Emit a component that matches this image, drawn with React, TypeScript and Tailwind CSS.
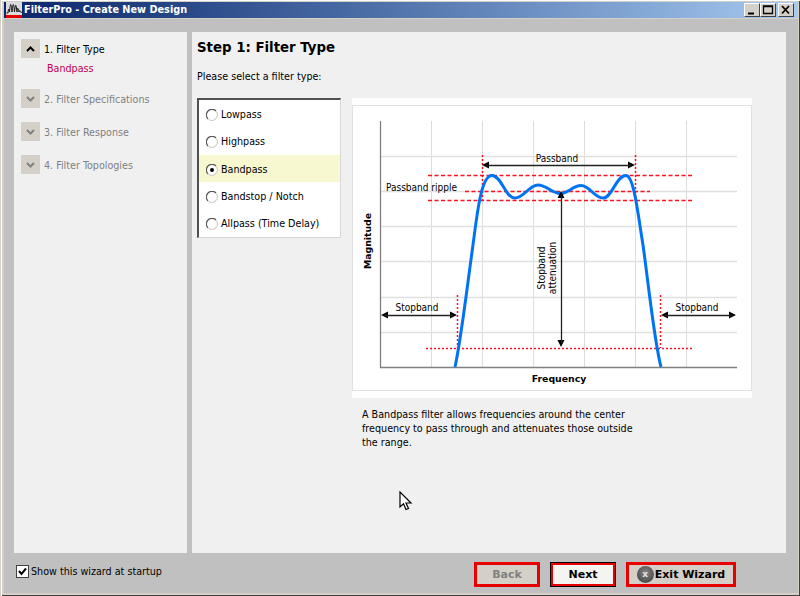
const steps = [
  { label: "2. Filter Specifications", top: "mt-[11px]" },
  { label: "3. Filter Response", top: "mt-[14px]" },
  { label: "4. Filter Topologies", top: "mt-[14px]" },
];

const filterTypes = [
  { label: "Lowpass", height: "h-[27px]" },
  { label: "Highpass", height: "h-[28px]" },
  { label: "Bandpass", height: "h-[27px]", selected: true },
  { label: "Bandstop / Notch", height: "h-[27px]" },
  { label: "Allpass (Time Delay)", height: "h-[27px]" },
];

function Chevron({ up, color }: { up?: boolean; color: string }) {
  return (
    <svg width="9" height="6" viewBox="0 0 9 6" fill="none" stroke={color} strokeWidth="2">
      <path d={up ? "M1 5 L4.5 1.5 L8 5" : "M1 1 L4.5 4.5 L8 1"} />
    </svg>
  );
}

function AppIcon() {
  return (
    <svg width="16" height="16" viewBox="0 0 16 16" className="shrink-0">
      <rect width="16" height="16" fill="#dcdcdc" />
      <rect y="13" width="16" height="3" fill="#e60000" />
      <path
        d="M0.500 11 H2 C2.500 6 3 6 3.500 10 C4.500 0 5 0 6 10 C7 0 7.500 0 8.500 10 C9.500 1 10 1 11 10 C11.500 5 12 5 13 10 C13.500 8 14 8 15.500 11"
        fill="none"
        stroke="#111"
        strokeWidth="1"
      />
    </svg>
  );
}

function CaptionButton({ kind }: { kind: "min" | "max" | "close" }) {
  return (
    <div className="w-[16px] h-[14px] bg-[#d4d0c8] border border-t-white border-l-white border-r-[#404040] border-b-[#404040] flex items-center justify-center">
      <svg width="12" height="10" viewBox="0 0 12 10" fill="none" stroke="#000">
        {kind === "min" && <path d="M2 8.500 H8" strokeWidth="2" />}
        {kind === "max" && <path d="M1.500 1 H10.500 V8.500 H1.500 Z M1.500 1.500 H10.500" strokeWidth="1.300" />}
        {kind === "close" && <path d="M2 1 L9 8.500 M9 1 L2 8.500" strokeWidth="1.800" />}
      </svg>
    </div>
  );
}

function Radio({ checked }: { checked?: boolean }) {
  return (
    <svg width="12" height="12" viewBox="0 0 12 12" className="shrink-0">
      <circle cx="6" cy="6" r="5.500" fill="#fff" />
      <path d="M10 2 A5.500 5.500 0 0 0 2 10" fill="none" stroke="#555" strokeWidth="1.200" />
      <path d="M10.200 2.500 A5.500 5.500 0 0 1 2.500 10.200" fill="none" stroke="#d4d0c8" strokeWidth="1.200" />
      {checked && <circle cx="6" cy="6" r="2" fill="#000" />}
    </svg>
  );
}

function FilterChart() {
  const gridX = [431, 482, 533, 584, 635, 686];
  const gridY = [156, 191, 226, 261, 297, 332];
  const red = "#ff1020";
  return (
    <svg width="400" height="300" viewBox="352 98 400 300" className="block">
      <rect x="352" y="98" width="400" height="300" fill="#fff" />
      <rect x="352.500" y="105.500" width="399" height="285" fill="#fff" stroke="#e0e0e0" />
      {gridX.map((x) => (
        <line key={x} x1={x + 0.5} x2={x + 0.5} y1="121" y2="367" stroke="#dcdcdc" />
      ))}
      {gridY.map((y) => (
        <line key={y} x1="381" x2="737" y1={y + 0.5} y2={y + 0.5} stroke="#e0e0e0" strokeWidth="1.500" />
      ))}
      <path d="M380.500 121 V367.500 H737" fill="none" stroke="#808080" strokeWidth="1.300" />

      <g stroke={red} strokeWidth="1.300" fill="none" strokeDasharray="4 2.500">
        <path d="M428 175.500 H692 M428 200.500 H692 M465 191.500 H650" />
      </g>
      <g stroke={red} strokeWidth="1.500" fill="none" strokeDasharray="2 2">
        <path d="M482.500 155 V200 M635.500 155 V200 M457.500 295 V348 M660.500 295 V348 M426 348.500 H692" />
      </g>

      <path
        d="M455 367 C461 340 468 280 473 245 C477 215 481 175 492 175.500 C502 176 505 198 515 198 C524 198 529 185 538 185 C547 185 552 194 561 193.500 C569 193 573 185.500 581 185.500 C590 185.500 594 198 603 198 C612 198 616 175.500 626 175.500 C634 175.500 638 215 643 245 C648 280 654 340 661 367"
        fill="none"
        stroke="#0073f5"
        strokeWidth="3"
      />

      <g fill="#000" stroke="none">
        <path d="M482 165 L489 161.500 V168.500 Z M635 165 L628 161.500 V168.500 Z" />
        <path d="M381 315 L388 311.500 V318.500 Z M457 315 L450 311.500 V318.500 Z" />
        <path d="M661 315 L668 311.500 V318.500 Z M736 315 L729 311.500 V318.500 Z" />
        <path d="M561 191 L557.500 198 H564.500 Z M561 347 L557.500 340 H564.500 Z" />
      </g>
      <path d="M486 165.500 H631 M385 315.500 H453 M665 315.500 H732 M561.500 195 V343" stroke="#222" strokeWidth="1.300" fill="none" />

      <g fill="#000" className="text-[10px]">
        <text x="557" y="162" textAnchor="middle">Passband</text>
        <text x="386" y="191">Passband ripple</text>
        <text x="417" y="311" textAnchor="middle">Stopband</text>
        <text x="697" y="311" textAnchor="middle">Stopband</text>
        <text transform="translate(545 268) rotate(-90)" textAnchor="middle">Stopband</text>
        <text transform="translate(556 268) rotate(-90)" textAnchor="middle">attenuation</text>
      </g>
      <g fill="#000" className="font-['DejaVu_Sans',sans-serif] text-[9.330px] font-bold">
        <text transform="translate(371 241) rotate(-90)" textAnchor="middle">Magnitude</text>
        <text x="559" y="382" textAnchor="middle">Frequency</text>
      </g>
    </svg>
  );
}

export default function App() {
  return (
    <div className="w-[800px] h-[596px] bg-[#d4d0c8] font-['DejaVu_Sans_Condensed','DejaVu_Sans',sans-serif] text-[10.67px] text-black overflow-hidden flex flex-col border-l border-l-[#d4d0c8] pt-[2px] pl-[3px] pr-[2px] pb-[3px] shadow-[inset_1px_1px_0_#fff,inset_-1px_-1px_0_#404040]">
      {/* Title bar */}
      <div className="h-[16px] shrink-0 bg-gradient-to-r from-[#0a246a] to-[#a6caf0] flex items-center pl-[2px] pr-[4px]">
        <AppIcon />
        <span className="ml-[2px] pt-[1px] text-white font-bold text-[10.800px] whitespace-nowrap">FilterPro - Create New Design</span>
        <div className="ml-auto flex items-center">
          <CaptionButton kind="min" />
          <CaptionButton kind="max" />
          <div className="w-[2px]" />
          <CaptionButton kind="close" />
        </div>
      </div>

      <div className="flex-1 mt-[1px] bg-[#c0c0c0] flex flex-col pl-[10px] pt-[13px]">
        <div className="flex gap-[5px] h-[521px]">
          {/* Wizard steps */}
          <div className="w-[173px] bg-[#f0f0f0] pl-[7px] pt-[7px]">
            <div className="flex items-center h-[19px]">
              <div className="w-[19px] h-[19px] bg-[#d4d0c8] flex items-center justify-center">
                <Chevron up color="#000" />
              </div>
              <span className="ml-[4px] pt-[2px]">1. Filter Type</span>
            </div>
            <div className="ml-[26px] mt-[2px] leading-[18px] text-[#c00050]">Bandpass</div>
            {steps.map((step) => (
              <div key={step.label} className={`flex items-center h-[19px] ${step.top}`}>
                <div className="w-[19px] h-[19px] bg-[#d4d0c8] flex items-center justify-center">
                  <Chevron color="#808080" />
                </div>
                <span className="ml-[4px] pt-[2px] text-[#808080]">{step.label}</span>
              </div>
            ))}
          </div>

          {/* Main panel */}
          <div className="w-[594px] bg-[#f0f0f0] pl-[5px] pt-[6px]">
            <h1 className="font-['DejaVu_Sans',sans-serif] font-bold text-[13.330px] leading-[18px] pt-[1px]">Step 1: Filter Type</h1>
            <p className="mt-[13px] leading-[14px]">Please select a filter type:</p>
            <div className="flex mt-[14px]">
              <div className="w-[144px] h-[140px] bg-white border border-t-2 border-l-2 border-t-[#505050] border-l-[#505050] border-r-[#d8d8d8] border-b-[#d8d8d8]">
                {filterTypes.map((item) => (
                  <div
                    key={item.label}
                    className={`flex items-center pt-[2px] pl-[7px] gap-[3px] ${item.height} ${item.selected ? "bg-[#f8f8d0]" : ""}`}
                  >
                    <Radio checked={item.selected} />
                    <span>{item.label}</span>
                  </div>
                ))}
              </div>
              <div className="ml-[11px]">
                <FilterChart />
                <p className="ml-[10px] mt-[10px] w-[280px] leading-[14px]">
                  A Bandpass filter allows frequencies around the center frequency to pass through and attenuates those outside the range.
                </p>
              </div>
            </div>
          </div>
        </div>

        {/* Footer */}
        <div className="flex items-start pt-[9px]">
          <label className="flex items-center gap-[2px] ml-[2px] h-[19px]">
            <span className="w-[13px] h-[13px] bg-white border border-[#404040] flex items-center justify-center">
              <svg width="11" height="11" viewBox="0 0 11 11" fill="none" stroke="#000" strokeWidth="2">
                <path d="M2 5 L4.500 8 L9 2.500" />
              </svg>
            </span>
            <span>Show this wizard at startup</span>
          </label>
          <div className="ml-auto mr-[62px] flex items-center gap-[10px] font-['DejaVu_Sans',sans-serif] font-bold text-[11px]">
            <button className="w-[66px] h-[25px] pt-[1px] bg-[#d4d0c8] border-[3px] border-[#e60000] text-[#808080]">Back</button>
            <button className="w-[66px] h-[25px] pt-[1px] bg-[#f4f4f0] border-[3px] border-[#e60000] outline outline-1 -outline-offset-1 outline-black">Next</button>
            <button className="w-[110px] h-[25px] bg-[#d4d0c8] border-[3px] border-[#e60000] flex items-center justify-center gap-[1px]">
              <span className="w-[17px] h-[17px] rounded-full bg-[radial-gradient(circle_at_50%_40%,#8a8a8a,#333)] text-[#e0e0e0] text-[9px] leading-[16px] text-center">x</span>
              <span className="pt-[1px]">Exit Wizard</span>
            </button>
          </div>
        </div>
      </div>

      {/* Mouse pointer */}
      <svg width="14" height="21" viewBox="0 0 14 21" className="absolute left-[399px] top-[491px]">
        <path d="M1 1 V16 L4.500 12.800 L7 18.500 L9.500 17.500 L7 12 H12 Z" fill="#fff" stroke="#000" strokeWidth="1.200" />
      </svg>
    </div>
  );
}
